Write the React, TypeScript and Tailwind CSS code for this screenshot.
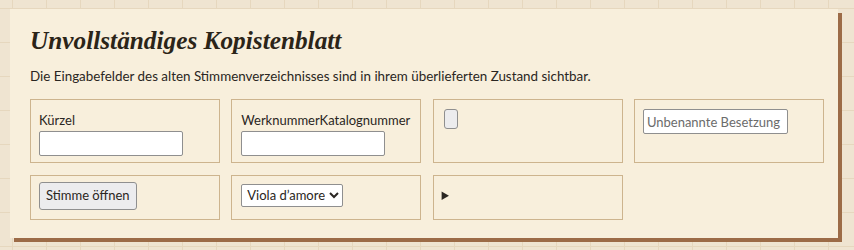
export default function App() {
  return (
    <div className="min-h-screen bg-[#efe4d1] bg-[linear-gradient(to_right,#e6d7be_1px,transparent_1px),linear-gradient(to_bottom,#e6d7be_1px,transparent_1px)] bg-[size:34px_34px] bg-[position:12px_8px] pt-[9px] pl-[10px] font-['Lato',sans-serif] text-[#2a2622]">
      <div className="w-[828px] bg-[#f8efdc] shadow-[4px_4px_0_#9c6b47] pl-5 pr-3 pt-[16px] pb-[18px]">
        <h1 className="font-['Liberation_Serif',serif] italic font-bold text-[25.3px] leading-[30px] text-[#2b2418]">
          Unvollständiges Kopistenblatt
        </h1>
        <p className="mt-[12px] text-[13.4px] leading-[18px]">
          Die Eingabefelder des alten Stimmenverzeichnisses sind in ihrem überlieferten Zustand sichtbar.
        </p>
        <div className="mt-[14px] grid grid-cols-[repeat(4,190px)] gap-x-[11.3px] gap-y-3 items-start">
          <div className="h-[64px] border border-[#cdb48e] px-[8px] pt-[11px]">
            <label className="block text-[13px] leading-[18px]">Kürzel</label>
            <input type="text" className="mt-[2px] block w-[144px] h-[25px] bg-white border border-[#8f8f8f] rounded-[2px]" />
          </div>
          <div className="h-[64px] border border-[#cdb48e] px-[9px] pt-[11px]">
            <label className="block text-[13px] leading-[18px]">WerknummerKatalognummer</label>
            <input type="text" className="mt-[2px] block w-[144px] h-[25px] bg-white border border-[#8f8f8f] rounded-[2px]" />
          </div>
          <div className="h-[64px] border border-[#cdb48e] px-[10px] pt-[9px]">
            <button className="block w-[14px] h-[20px] bg-[#ececee] border border-[#8f8f8f] rounded-[3px]" />
          </div>
          <div className="h-[64px] border border-[#cdb48e] px-[8px] pt-[9px]">
            <input
              type="text"
              placeholder="Unbenannte Besetzung"
              className="block w-[145px] h-[25px] px-[3px] text-[13px] bg-white border border-[#8f8f8f] rounded-[2px] placeholder:text-[#6b6b6b]"
            />
          </div>
          <div className="h-[45px] border border-[#cdb48e] px-[8px] pt-[6px]">
            <button className="h-[28px] px-[6px] text-[13px] bg-[#ececee] border border-[#8f8f8f] rounded-[3px]">
              Stimme öffnen
            </button>
          </div>
          <div className="h-[45px] border border-[#cdb48e] px-[9px] pt-[6px]">
            <select className="h-[23px] px-[1px] text-[13px] bg-white border border-[#8f8f8f] rounded-[2px]">
              <option>Viola d’amore</option>
            </select>
          </div>
          <div className="h-[45px] border border-[#cdb48e] px-[8px] pt-[10px]">
            <details>
              <summary className="text-[13px] leading-[18px]"></summary>
            </details>
          </div>
        </div>
      </div>
    </div>
  );
}
